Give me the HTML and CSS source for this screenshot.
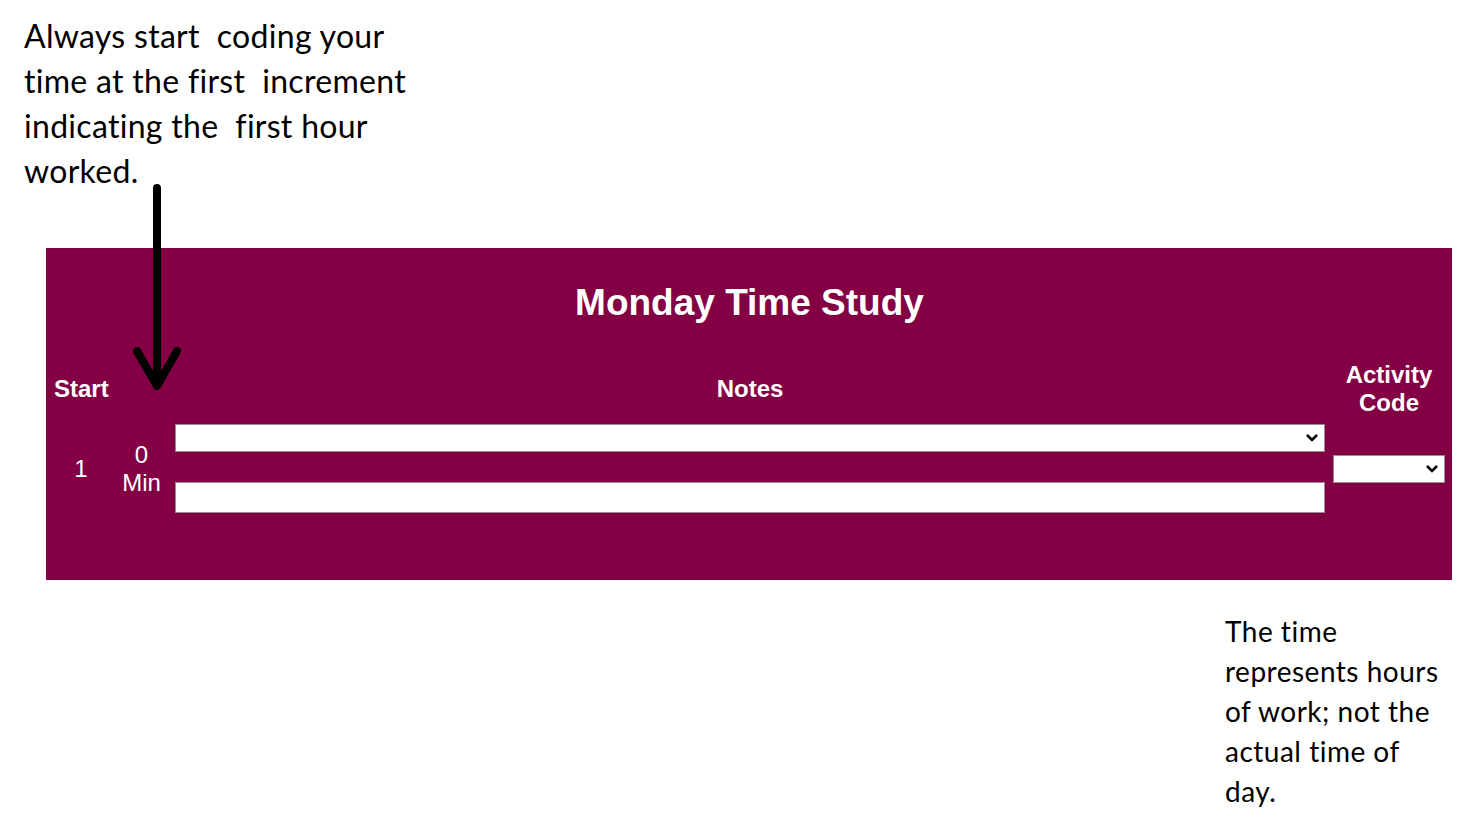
FILE: index.html
```html
<!DOCTYPE html>
<html lang="en">
<head>
    <meta charset="UTF-8">
    <meta name="viewport" content="width=device-width, initial-scale=1.0">
    <title>Monday Time Study</title>
    <link rel="stylesheet" href="styles.css">
</head>
<body>
    <div class="page">
        <div class="note note-top">
            <div>Always start  coding your</div>
            <div>time at the first  increment</div>
            <div>indicating the  first hour</div>
            <div>worked.</div>
        </div>

        <!-- pointer from the note down to the first row -->
        <svg class="arrow" width="60" height="220" viewBox="0 0 60 220">
            <path d="M27 4 V200 M7 167 L27 202 L47 167" fill="none" stroke="#000" stroke-width="8" stroke-linecap="round" stroke-linejoin="round"/>
        </svg>

        <div class="study">
            <h1>Monday Time Study</h1>
            <div class="grid">
                <div class="head head-start">Start</div>
                <div></div>
                <div class="head">Notes</div>
                <div class="head head-code">Activity<br>Code</div>

                <div class="cell">1</div>
                <div class="cell">0<br>Min</div>
                <div class="notes">
                    <div class="dropdown">
                        <select class="field"><option></option></select>
                        <svg class="chev" width="14" height="10" viewBox="0 0 14 10"><path d="M2 2 L7 7 L12 2" fill="none" stroke="#000" stroke-width="2.6"/></svg>
                    </div>
                    <input class="field field-text" type="text">
                </div>
                <div class="cell cell-code">
                    <div class="dropdown">
                        <select class="field"><option></option></select>
                        <svg class="chev" width="14" height="10" viewBox="0 0 14 10"><path d="M2 2 L7 7 L12 2" fill="none" stroke="#000" stroke-width="2.6"/></svg>
                    </div>
                </div>
            </div>
        </div>

        <div class="note note-bottom">
            <div>The time</div>
            <div>represents hours</div>
            <div>of work; not the</div>
            <div>actual time of</div>
            <div>day.</div>
        </div>
    </div>
</body>
</html>
```

FILE: styles.css
```css
body {
    margin: 0;
    background: #fff;
    font-family: "Liberation Sans", Arial, sans-serif;
}
.page {
    position: relative;
    width: 1475px;
    height: 831px;
    overflow: hidden;
}
.note {
    font-family: Lato, "Open Sans", sans-serif;
    color: #000;
}
.note div {
    white-space: pre;
}
.note-top {
    padding: 13px 0 0 24px;
    font-size: 32px;
    letter-spacing: 0.3px;
    line-height: 45px;
}
.note-bottom {
    margin: 31px 0 0 1225px;
    font-size: 28px;
    letter-spacing: 0.5px;
    line-height: 40px;
}
.arrow {
    position: absolute;
    left: 130px;
    top: 184px;
}
.study {
    margin: 55px 0 0 46px;
    width: 1406px;
    height: 332px;
    box-sizing: border-box;
    padding: 35px 7px 0 8px;
    background: #830045;
    color: #fff;
}
.study h1 {
    margin: 0 0 38px;
    text-align: center;
    font-size: 37px;
    line-height: 40px;
}
.grid {
    display: grid;
    grid-template-columns: 54px 67px 1150px 120px;
    align-items: center;
}
.head {
    text-align: center;
    font-weight: bold;
    font-size: 24px;
    line-height: 28px;
}
.head-start {
    text-align: left;
}
.head-code,
.cell-code {
    padding-left: 8px;
}
.cell {
    text-align: center;
    font-size: 24px;
    line-height: 28px;
    margin-top: 7px;
}
.notes {
    display: flex;
    flex-direction: column;
    gap: 30px;
    margin-top: 7px;
}
.dropdown {
    position: relative;
}
.chev {
    position: absolute;
    right: 6px;
    top: 9px;
    pointer-events: none;
}
.field {
    display: block;
    width: 100%;
    height: 28px;
    box-sizing: border-box;
    margin: 0;
    border: 1px solid #9a8a92;
    border-radius: 0;
    background: #fff;
    font-size: 16px;
    appearance: none;
}
.field-text {
    height: 31px;
}
```
